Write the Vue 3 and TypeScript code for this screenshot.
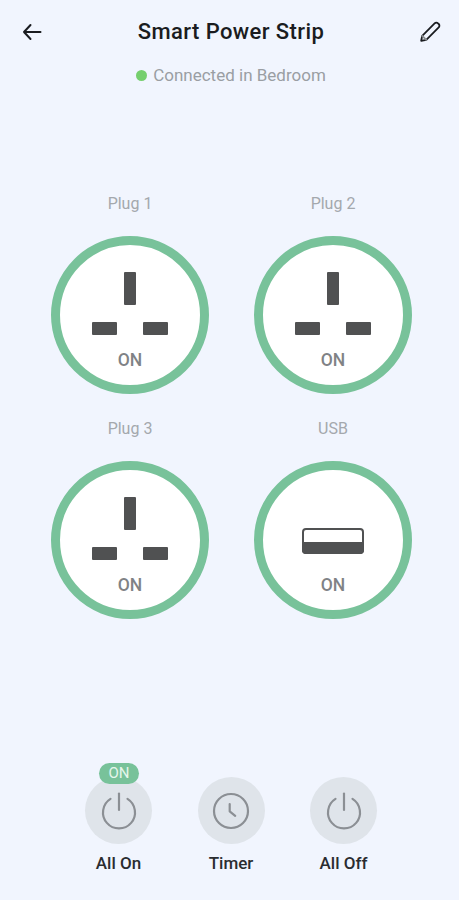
<template>
  <div class="page">
    <header class="top-bar">
      <button class="icon-btn" aria-label="Back">
        <svg width="24" height="24" viewBox="0 0 24 24" fill="none" stroke="#1a1c20" stroke-width="2" stroke-linecap="round" stroke-linejoin="round">
          <path d="M20.5 12H4M10.5 5 4 12l6.5 7" />
        </svg>
      </button>
      <h1 class="title">Smart Power Strip</h1>
      <button class="icon-btn" aria-label="Edit">
        <svg width="24" height="24" viewBox="0 0 24 24" fill="none" stroke="#1a1c20" stroke-width="1.8" stroke-linecap="round" stroke-linejoin="round">
          <path d="M3.2 20.8l1-5L16.6 3.3a2.4 2.4 0 0 1 3.4 0l.7.7a2.4 2.4 0 0 1 0 3.4L8.3 19.8z" />
          <path d="M4.2 15.8l4.1 4" stroke="#8a8d91" />
        </svg>
      </button>
    </header>

    <p class="status"><span class="dot"></span>Connected in Bedroom</p>

    <section class="plugs">
      <div v-for="plug in plugs" :key="plug.name" class="plug">
        <span class="plug-name">{{ plug.name }}</span>
        <div class="socket">
          <svg v-if="plug.type === 'usb'" class="usb" width="62" height="26" viewBox="0 0 62 26">
            <rect x="1" y="1" width="60" height="24" rx="3" fill="#fff" stroke="#505152" stroke-width="2" />
            <path d="M0 14h62v8a4 4 0 0 1-4 4H4a4 4 0 0 1-4-4z" fill="#505152" />
          </svg>
          <svg v-else class="pins" width="76" height="63" viewBox="0 0 76 63" fill="#505152">
            <rect x="32" y="0" width="12" height="33" rx="1" />
            <rect x="0" y="50" width="25" height="13" rx="1" />
            <rect x="51" y="50" width="25" height="13" rx="1" />
          </svg>
          <span class="socket-state">ON</span>
        </div>
      </div>
    </section>

    <footer class="actions">
      <div v-for="action in actions" :key="action.label" class="action">
        <span v-if="action.badge" class="badge">ON</span>
        <div class="action-circle">
          <svg v-if="action.icon === 'power'" width="38" height="38" viewBox="0 0 38 38" fill="none" stroke="#8b8f94" stroke-width="2.2" stroke-linecap="round">
            <path d="M10.5 6.9a16 16 0 1 0 17 0" />
            <path d="M19 1.5V18" />
          </svg>
          <svg v-else width="38" height="38" viewBox="0 0 38 38" fill="none" stroke="#8b8f94" stroke-width="2.2" stroke-linecap="round" stroke-linejoin="round">
            <circle cx="19" cy="19" r="17" />
            <path d="M17.7 12v7.3l5.5 4.5" />
          </svg>
        </div>
        <span class="action-label">{{ action.label }}</span>
      </div>
    </footer>
  </div>
</template>

<script setup lang="ts">
interface Plug {
  name: string;
  type: 'socket' | 'usb';
}

interface Action {
  label: string;
  icon: 'power' | 'clock';
  badge?: boolean;
}

const plugs: Plug[] = [
  { name: 'Plug 1', type: 'socket' },
  { name: 'Plug 2', type: 'socket' },
  { name: 'Plug 3', type: 'socket' },
  { name: 'USB', type: 'usb' }
];

const actions: Action[] = [
  { label: 'All On', icon: 'power', badge: true },
  { label: 'Timer', icon: 'clock' },
  { label: 'All Off', icon: 'power' }
];
</script>

<style>
html, body { background: #f1f5fe; }
</style>

<style scoped>
.page {
  width: 459px;
  height: 900px;
  box-sizing: border-box;
  background: #f1f5fe;
  font-family: Roboto, "Liberation Sans", sans-serif;
  display: flex;
  flex-direction: column;
  overflow: hidden;
}
.top-bar {
  display: flex;
  align-items: center;
  justify-content: space-between;
  height: 24px;
  padding: 20px 17px 0 20px;
}
.icon-btn {
  width: 24px;
  height: 24px;
  padding: 0;
  border: 0;
  background: none;
  display: flex;
}
.title {
  margin: 0;
  font-size: 22px;
  font-weight: 500;
  line-height: 24px;
  color: #1a1c20;
  letter-spacing: 0.4px;
}
.status {
  margin: 20px 0 0;
  display: flex;
  align-items: center;
  justify-content: center;
  font-size: 17px;
  line-height: 22px;
  color: #9a9ea3;
  padding-left: 3px;
}
.dot {
  width: 11px;
  height: 11px;
  margin-right: 6px;
  border-radius: 50%;
  background: #76cf6e;
}
.plugs {
  margin: 108px 0 0 51px;
  display: grid;
  grid-template-columns: 158px 158px;
  column-gap: 45px;
  row-gap: 25px;
}
.plug {
  display: flex;
  flex-direction: column;
  align-items: center;
}
.plug-name {
  font-size: 16px;
  line-height: 20px;
  color: #a4a8ad;
  margin-bottom: 22px;
}
.socket {
  width: 158px;
  height: 158px;
  box-sizing: border-box;
  border: 9px solid #78c29a;
  border-radius: 50%;
  background: #fff;
  display: flex;
  flex-direction: column;
  align-items: center;
}
.pins { margin-top: 27px; }
.usb { margin-top: 58px; }
.pins + .socket-state { margin-top: 15px; }
.usb + .socket-state { margin-top: 21px; }
.socket-state {
  font-size: 17.5px;
  font-weight: 500;
  line-height: 20px;
  color: #808285;
}
.actions {
  margin-top: auto;
  padding: 0 82px 26px 85px;
  display: flex;
  justify-content: space-between;
}
.action {
  position: relative;
  width: 67px;
  display: flex;
  flex-direction: column;
  align-items: center;
}
.badge {
  position: absolute;
  top: -14px;
  left: 14px;
  width: 40px;
  height: 21px;
  border-radius: 11px;
  background: #78c29a;
  color: #e6f6ec;
  font-size: 15px;
  line-height: 21px;
  text-align: center;
}
.action-circle {
  width: 67px;
  height: 67px;
  border-radius: 50%;
  background: #dfe4ea;
  display: flex;
  align-items: center;
  justify-content: center;
}
.action-label {
  margin-top: 8px;
  font-size: 17px;
  font-weight: 500;
  line-height: 22px;
  color: #2a2c30;
  white-space: nowrap;
}
</style>
